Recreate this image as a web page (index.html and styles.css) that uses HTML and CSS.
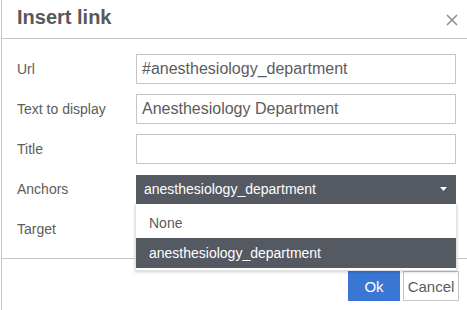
FILE: index.html
```html
<!DOCTYPE html>
<html>
<head>
<meta charset="utf-8">
<link rel="stylesheet" href="styles.css">
</head>
<body>
<div class="dialog">
  <div class="head">
    <div class="title">Insert link</div>
    <button class="close" aria-label="Close">
      <svg width="12" height="12" viewBox="0 0 12 12"><path d="M1 1L11 11M11 1L1 11" stroke="#8f8f8f" stroke-width="1.6" fill="none"/></svg>
    </button>
  </div>
  <div class="body">
    <div class="row">
      <label class="lbl">Url</label>
      <div class="input">#anesthesiology_department</div>
    </div>
    <div class="row">
      <label class="lbl">Text to display</label>
      <div class="input">Anesthesiology Department</div>
    </div>
    <div class="row">
      <label class="lbl">Title</label>
      <div class="input"></div>
    </div>
    <div class="row">
      <label class="lbl">Anchors</label>
      <div class="selectwrap">
        <div class="select">
          <span>anesthesiology_department</span>
          <svg class="caret" width="7" height="4" viewBox="0 0 7 4"><path d="M0 0H7L3.5 4Z" fill="#fff"/></svg>
        </div>
        <div class="menu">
          <div class="item">None</div>
          <div class="item active">anesthesiology_department</div>
        </div>
      </div>
    </div>
    <div class="row">
      <label class="lbl">Target</label>
      <div></div>
    </div>
  </div>
  <div class="foot">
    <button class="btn primary">Ok</button>
    <button class="btn cancel">Cancel</button>
  </div>
</div>
</body>
</html>
```

FILE: styles.css
```css
html, body {
  margin: 0;
  padding: 0;
  background: #fff;
}
body {
  font-family: "Liberation Sans", Arial, sans-serif;
  color: #595959;
  overflow: hidden;
}
.dialog {
  margin-left: 1px;
  height: 310px;
  border-left: 1px solid #c8c8c8;
  display: flex;
  flex-direction: column;
}
.head {
  height: 38px;
  border-bottom: 1px solid #c5c5c5;
  display: flex;
  align-items: flex-start;
  justify-content: space-between;
  padding: 0 9px 0 15px;
}
.title {
  font-size: 20px;
  font-weight: bold;
  line-height: 34px;
  color: #595959;
}
.close {
  border: 0;
  background: none;
  padding: 0;
  margin-top: 14px;
  width: 12px;
  height: 12px;
  display: block;
}
.close svg { display: block; }
.body {
  padding: 15px 11px 14px 15px;
  display: flex;
  flex-direction: column;
  gap: 10px;
  border-bottom: 1px solid #c5c5c5;
}
.row {
  display: grid;
  grid-template-columns: 119px 1fr;
  align-items: center;
  height: 30px;
}
.lbl {
  font-size: 14px;
  color: #5c5c5c;
}
.input {
  box-sizing: border-box;
  height: 30px;
  border: 1px solid #c5c5c5;
  padding: 0 5px;
  font-size: 16px;
  line-height: 28px;
  color: #5c5c5c;
  white-space: nowrap;
}
.selectwrap {
  position: relative;
}
.select {
  box-sizing: border-box;
  height: 29px;
  background: #555a62;
  color: #fff;
  font-size: 14px;
  display: flex;
  align-items: center;
  justify-content: space-between;
  padding: 0 9px 0 8px;
}
.menu {
  position: absolute;
  left: -1px;
  right: -1px;
  top: 29px;
  z-index: 5;
  background: #fff;
  border: 1px solid #e2e2e2;
  border-top: 0;
  padding: 4px 0 2px;
  box-shadow: 0 1px 3px rgba(0,0,0,0.2);
}
.item {
  height: 30px;
  line-height: 30px;
  padding-left: 13px;
  font-size: 14px;
  color: #5c5c5c;
}
.item.active {
  background: #555a62;
  color: #fff;
}
.foot {
  display: flex;
  justify-content: flex-end;
  gap: 3px;
  padding: 12px 8px 0 0;
}
.btn {
  box-sizing: border-box;
  height: 30px;
  font-family: "Liberation Sans", Arial, sans-serif;
  font-size: 15px;
  color: #5c5c5c;
  background: #fff;
  border: 1px solid #c5c5c5;
  padding: 0;
  margin: 0;
}
.btn.primary {
  width: 52px;
  background: #3a77d5;
  border-color: #3a77d5;
  color: #fff;
}
.btn.cancel {
  width: 56px;
}
```
